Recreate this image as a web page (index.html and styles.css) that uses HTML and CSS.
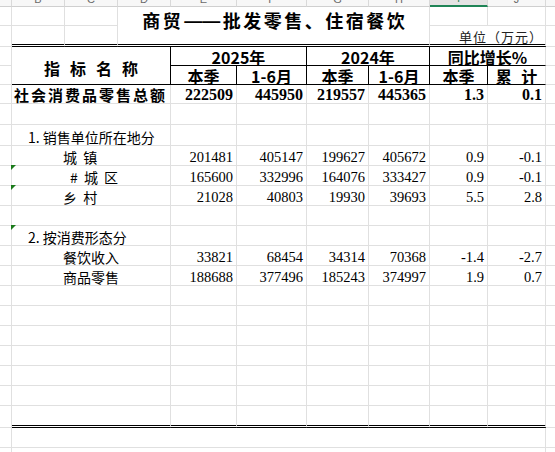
FILE: index.html
```html
<!DOCTYPE html>
<html lang="zh-CN">
<head>
<meta charset="utf-8">
<title>商贸——批发零售、住宿餐饮</title>
<link rel="stylesheet" href="styles.css">
</head>
<body>
<div class="sheet">
  <!-- column letters -->
  <div class="c s"></div>
  <div class="c s"><span>B</span></div>
  <div class="c s"><span>C</span></div>
  <div class="c s"><span>D</span></div>
  <div class="c s"><span>E</span></div>
  <div class="c s"><span>F</span></div>
  <div class="c s"><span>G</span></div>
  <div class="c s"><span>H</span></div>
  <div class="c s sel"><span>I</span></div>
  <div class="c s"><span>J</span></div>
  <div class="c s"></div>

  <!-- row 1 -->
  <div class="c"></div>
  <div class="c"></div>
  <div class="c"></div>
  <div class="c title dbl">商贸<span class="dash">——</span>批发零售、住宿餐饮</div>
  <div class="c"></div>
  <div class="c"></div>
  <div class="c"></div>

  <!-- row 2 -->
  <div class="c"></div>
  <div class="c dbl"></div>
  <div class="c dbl"></div>
  <div class="c unit dbl">单位（万元）</div>
  <div class="c"></div>

  <!-- header row 1 -->
  <div class="c"></div>
  <div class="c hn">指标名称</div>
  <div class="c hy">2025年</div>
  <div class="c hy">2024年</div>
  <div class="c hy last">同比增长%</div>
  <div class="c"></div>

  <!-- header row 2 -->
  <div class="c"></div>
  <div class="c hs">本季</div>
  <div class="c hs">1-6月</div>
  <div class="c hs">本季</div>
  <div class="c hs">1-6月</div>
  <div class="c hs">本季</div>
  <div class="c hs last ls">累 计</div>
  <div class="c"></div>

  <!-- total -->
  <div class="c"></div>
  <div class="c tot">社会消费品零售总额</div>
  <div class="c num b">222509</div>
  <div class="c num b">445950</div>
  <div class="c num b">219557</div>
  <div class="c num b">445365</div>
  <div class="c num b">1.3</div>
  <div class="c num b">0.1</div>
  <div class="c"></div>

  <!-- empty -->
  <div class="c"></div><div class="c m3"></div>
  <div class="c"></div><div class="c"></div><div class="c"></div><div class="c"></div><div class="c"></div><div class="c"></div>
  <div class="c"></div>

  <!-- section 1 -->
  <div class="c"></div>
  <div class="c lbl i1">1. 销售单位所在地分</div>
  <div class="c"></div><div class="c"></div><div class="c"></div><div class="c"></div><div class="c"></div><div class="c"></div>
  <div class="c"></div>

  <div class="c"></div>
  <div class="c lbl i2 ws">城 镇</div>
  <div class="c num">201481</div>
  <div class="c num">405147</div>
  <div class="c num">199627</div>
  <div class="c num">405672</div>
  <div class="c num">0.9</div>
  <div class="c num">-0.1</div>
  <div class="c"></div>

  <div class="c"></div>
  <div class="c lbl i3 ws tri"># 城 区</div>
  <div class="c num">165600</div>
  <div class="c num">332996</div>
  <div class="c num">164076</div>
  <div class="c num">333427</div>
  <div class="c num">0.9</div>
  <div class="c num">-0.1</div>
  <div class="c"></div>

  <div class="c"></div>
  <div class="c lbl i2 ws tri">乡 村</div>
  <div class="c num">21028</div>
  <div class="c num">40803</div>
  <div class="c num">19930</div>
  <div class="c num">39693</div>
  <div class="c num">5.5</div>
  <div class="c num">2.8</div>
  <div class="c"></div>

  <!-- empty -->
  <div class="c"></div><div class="c m3"></div>
  <div class="c"></div><div class="c"></div><div class="c"></div><div class="c"></div><div class="c"></div><div class="c"></div>
  <div class="c"></div>

  <!-- section 2 -->
  <div class="c"></div>
  <div class="c lbl i1 tri">2. 按消费形态分</div>
  <div class="c"></div><div class="c"></div><div class="c"></div><div class="c"></div><div class="c"></div><div class="c"></div>
  <div class="c"></div>

  <div class="c"></div>
  <div class="c lbl i2">餐饮收入</div>
  <div class="c num">33821</div>
  <div class="c num">68454</div>
  <div class="c num">34314</div>
  <div class="c num">70368</div>
  <div class="c num">-1.4</div>
  <div class="c num">-2.7</div>
  <div class="c"></div>

  <div class="c"></div>
  <div class="c lbl i2">商品零售</div>
  <div class="c num">188688</div>
  <div class="c num">377496</div>
  <div class="c num">185243</div>
  <div class="c num">374997</div>
  <div class="c num">1.9</div>
  <div class="c num">0.7</div>
  <div class="c"></div>

  <!-- empty rows -->
  <div class="c"></div><div class="c m3"></div>
  <div class="c"></div><div class="c"></div><div class="c"></div><div class="c"></div><div class="c"></div><div class="c"></div>
  <div class="c"></div>

  <div class="c"></div><div class="c m3"></div>
  <div class="c"></div><div class="c"></div><div class="c"></div><div class="c"></div><div class="c"></div><div class="c"></div>
  <div class="c"></div>

  <div class="c"></div><div class="c m3"></div>
  <div class="c"></div><div class="c"></div><div class="c"></div><div class="c"></div><div class="c"></div><div class="c"></div>
  <div class="c"></div>

  <div class="c"></div><div class="c m3"></div>
  <div class="c"></div><div class="c"></div><div class="c"></div><div class="c"></div><div class="c"></div><div class="c"></div>
  <div class="c"></div>

  <div class="c"></div><div class="c m3"></div>
  <div class="c"></div><div class="c"></div><div class="c"></div><div class="c"></div><div class="c"></div><div class="c"></div>
  <div class="c"></div>

  <div class="c"></div><div class="c m3"></div>
  <div class="c"></div><div class="c"></div><div class="c"></div><div class="c"></div><div class="c"></div><div class="c"></div>
  <div class="c"></div>

  <!-- last table row with double bottom -->
  <div class="c"></div><div class="c m3 dbl"></div>
  <div class="c dbl"></div><div class="c dbl"></div><div class="c dbl"></div><div class="c dbl"></div><div class="c dbl"></div><div class="c dbl"></div>
  <div class="c"></div>

  <!-- below table -->
  <div class="c"></div><div class="c m9"></div><div class="c"></div>
  <div class="c"></div><div class="c m9"></div><div class="c"></div>
</div>
</body>
</html>
```

FILE: styles.css
```css
* {
  box-sizing: border-box;
}

html,
body {
  margin: 0;
  padding: 0;
  background: #fff;
}

body {
  width: 555px;
  height: 452px;
  overflow: hidden;
  font-family: "Noto Sans CJK SC", "Noto Sans", sans-serif;
  color: #000;
}

.sheet {
  display: grid;
  grid-template-columns: 12px 53px 53px 53px 66px 70px 62px 61px 58px 58px 30px;
  grid-template-rows: 7px 19px 21px 19px 19px 19px 21px 21px repeat(13, 20px) 22px 20px 20px;
  width: 576px;
}

.c {
  position: relative;
  display: flex;
  align-items: flex-end;
  min-width: 0;
  border-right: 1px solid #e0e0e0;
  border-bottom: 1px solid #e0e0e0;
  white-space: nowrap;
  line-height: 16px;
}

/* column letter strip */
.s {
  justify-content: center;
  overflow: hidden;
  padding-bottom: 1px;
  background: #f7f7f7;
  border-right-color: #d9d9d9;
  border-bottom-color: #cfcfcf;
  font-family: "Liberation Sans", sans-serif;
  font-size: 11px;
  line-height: 12px;
  color: #6a6a6a;
}

.sel {
  background: #e4e4e4;
  border-bottom: 2px solid #1f8456;
  color: #1f8456;
}

/* title area */
.title {
  grid-column: span 5;
  grid-row: span 2;
  justify-content: center;
  align-items: flex-start;
  padding-top: 1px;
  padding-left: 2.5px;
  font-size: 18px;
  font-weight: 700;
  line-height: 24px;
  letter-spacing: 2.5px;
}

.dash {
  font-family: "Liberation Sans", sans-serif;
  font-weight: 700;
  letter-spacing: 0;
  margin: 0 2.5px 0 1px;
  position: relative;
  top: 1px;
}

.unit {
  grid-column: span 2;
  justify-content: flex-end;
  padding-right: 2px;
  font-size: 13px;
  line-height: 14px;
  letter-spacing: 1px;
  color: #222;
}

.dbl {
  border-bottom: 3px double #000;
}

/* header */
.hn {
  grid-column: span 3;
  grid-row: span 2;
  justify-content: center;
  align-items: center;
  padding-top: 4px;
  padding-left: 10px;
  font-size: 16px;
  font-weight: 700;
  letter-spacing: 10px;
  border-right-color: #000;
  border-bottom-color: #000;
}

.hy {
  grid-column: span 2;
  justify-content: center;
  font-size: 16px;
  font-weight: 700;
  border-right-color: #000;
  border-bottom-color: #000;
}

.hs {
  justify-content: center;
  font-size: 16px;
  font-weight: 700;
  border-right-color: #000;
  border-bottom-color: #000;
}

.hy.last,
.hs.last {
  border-right-color: #e0e0e0;
}

.ls {
  word-spacing: 6px;
}

/* body rows */
.tot {
  grid-column: span 3;
  padding-left: 2px;
  font-size: 15px;
  font-weight: 700;
  letter-spacing: 2px;
}

.lbl {
  grid-column: span 3;
  font-size: 14px;
}

.i1 {
  padding-left: 16px;
}

.i2 {
  padding-left: 51px;
}

.i3 {
  padding-left: 58px;
}

.ws {
  word-spacing: 3px;
}

.m3 {
  grid-column: span 3;
}

.m9 {
  grid-column: span 9;
}

.num {
  justify-content: flex-end;
  padding-right: 3px;
  font-family: "Liberation Serif", "Times New Roman", serif;
  font-size: 14.5px;
}

.num.b {
  font-size: 16px;
  font-weight: 700;
}

.tri::before {
  content: "";
  position: absolute;
  left: -1px;
  top: -1px;
  width: 0;
  height: 0;
  border-top: 5px solid #1b7a1b;
  border-right: 5px solid transparent;
}
```
